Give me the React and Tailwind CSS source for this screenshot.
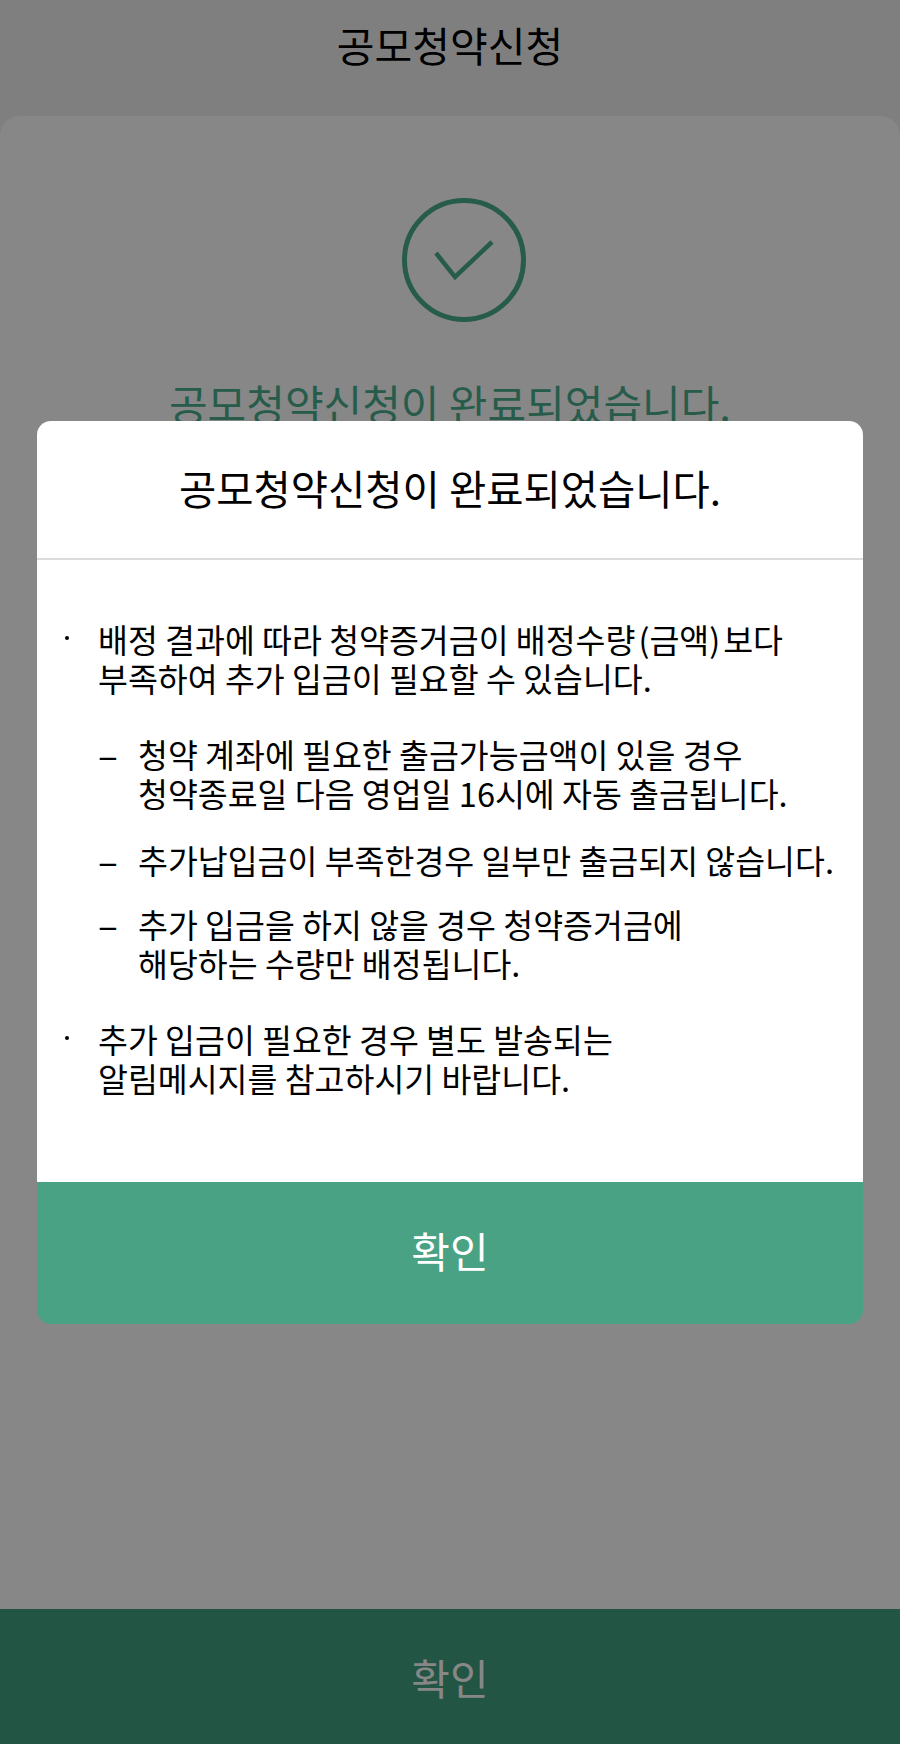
import React from "react";

const font = "font-['Noto_Sans_CJK_KR','Noto_Sans',sans-serif]";

function Dash({ children, className = "" }) {
  return (
    <div className={`flex ml-[33px] ${className}`}>
      <span className="w-[40px] shrink-0 text-[37px]">–</span>
      <p>{children}</p>
    </div>
  );
}

function Bullet({ children, className = "" }) {
  return (
    <div className={`flex ${className}`}>
      <span className="w-[33px] shrink-0 pt-[17px]">
        <span className="block w-[4px] h-[4px] rounded-full bg-black"></span>
      </span>
      <p>{children}</p>
    </div>
  );
}

export default function App() {
  return (
    <div className={`relative h-[1744px] w-[900px] overflow-hidden bg-[#f0f0f0] flex flex-col ${font}`}>
      <header className="h-[116px] shrink-0 pt-[14px] text-center text-[41px] leading-[60px] text-black">
        공모청약신청
      </header>

      <main className="flex-1 bg-white rounded-t-[20px] flex flex-col items-center pt-[82px]">
        <svg width="124" height="124" viewBox="0 0 124 124" fill="none" stroke="#4aae8e" className="ml-[28px]">
          <circle cx="62" cy="62" r="59.5" strokeWidth="5" />
          <path d="M34 55 L53 79 L90 44" strokeWidth="4.5" />
        </svg>
        <h1 className="mt-[51px] text-[42px] leading-[60px] text-[#4aae8e]">공모청약신청이 완료되었습니다.</h1>
      </main>

      <button className="h-[135px] shrink-0 bg-[#40a080] text-white text-[42px]">확인</button>

      <div className="absolute inset-0 bg-[#00000078] pt-[421px] px-[37px]">
        <div className="rounded-[14px] overflow-hidden text-black">
          <div className="h-[139px] bg-white border-b-2 border-[#dcdcdc] flex items-center justify-center text-[40.5px] pb-[2px]">
            공모청약신청이 완료되었습니다.
          </div>

          <div className="h-[622px] bg-white pt-[59px] pl-[28px] text-[32.5px] leading-[39px]">
            <Bullet>
              배정 결과에 따라 청약증거금이 배정수량<span className="mx-[3px]">(금액)</span>보다
              <br />
              부족하여 추가 입금이 필요할 수 있습니다.
            </Bullet>
            <Dash className="mt-[37px]">
              청약 계좌에 필요한 출금가능금액이 있을 경우
              <br />
              청약종료일 다음 영업일 16시에 자동 출금됩니다.
            </Dash>
            <Dash className="mt-[28px]">추가납입금이 부족한경우 일부만 출금되지 않습니다.</Dash>
            <Dash className="mt-[25px]">
              추가 입금을 하지 않을 경우 청약증거금에
              <br />
              해당하는 수량만 배정됩니다.
            </Dash>
            <Bullet className="mt-[37px]">
              추가 입금이 필요한 경우 별도 발송되는
              <br />
              알림메시지를 참고하시기 바랍니다.
            </Bullet>
          </div>

          <button className="block w-full h-[142px] bg-[#49a284] text-white text-[42px] pb-[8px]">확인</button>
        </div>
      </div>
    </div>
  );
}
